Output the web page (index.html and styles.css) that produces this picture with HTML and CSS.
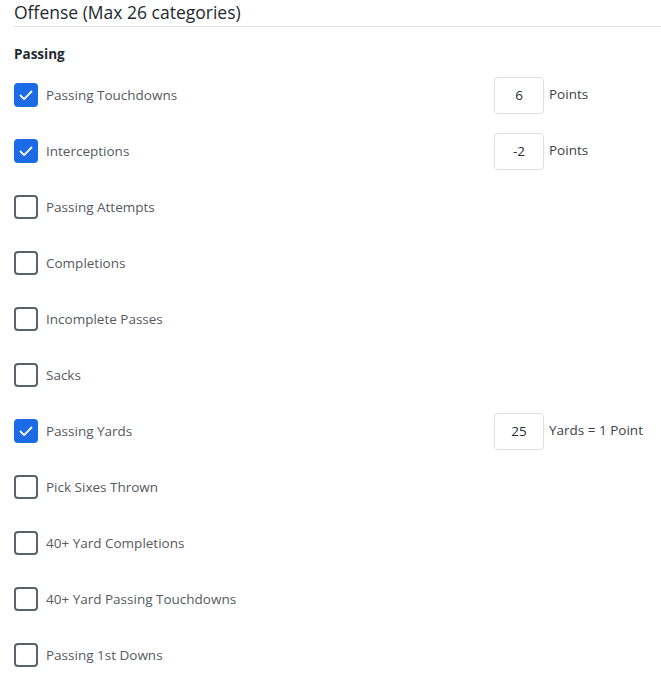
FILE: index.html
```html
<!DOCTYPE html>
<html lang="en">
<head>
    <meta charset="UTF-8">
    <meta name="viewport" content="width=device-width, initial-scale=1.0">
    <title>Offense Scoring</title>
    <link rel="stylesheet" href="styles.css">
</head>
<body>
    <div class="group-head">
        <h1><strong>Offense</strong> (Max 26 categories)</h1>
    </div>

    <h2 class="section-title">Passing</h2>

    <ul class="stat-list">
        <li class="stat">
            <span class="box checked"><svg viewBox="0 0 20 20"><path d="M4.5 10.5l3.6 3.6L15.5 6.5"/></svg></span>
            <span class="label">Passing Touchdowns</span>
            <span class="value">6</span>
            <span class="unit">Points</span>
        </li>
        <li class="stat">
            <span class="box checked"><svg viewBox="0 0 20 20"><path d="M4.5 10.5l3.6 3.6L15.5 6.5"/></svg></span>
            <span class="label">Interceptions</span>
            <span class="value">-2</span>
            <span class="unit">Points</span>
        </li>
        <li class="stat">
            <span class="box"></span>
            <span class="label">Passing Attempts</span>
        </li>
        <li class="stat">
            <span class="box"></span>
            <span class="label">Completions</span>
        </li>
        <li class="stat">
            <span class="box"></span>
            <span class="label">Incomplete Passes</span>
        </li>
        <li class="stat">
            <span class="box"></span>
            <span class="label">Sacks</span>
        </li>
        <li class="stat">
            <span class="box checked"><svg viewBox="0 0 20 20"><path d="M4.5 10.5l3.6 3.6L15.5 6.5"/></svg></span>
            <span class="label">Passing Yards</span>
            <span class="value">25</span>
            <span class="unit">Yards = 1 Point</span>
        </li>
        <li class="stat">
            <span class="box"></span>
            <span class="label">Pick Sixes Thrown</span>
        </li>
        <li class="stat">
            <span class="box"></span>
            <span class="label">40+ Yard Completions</span>
        </li>
        <li class="stat">
            <span class="box"></span>
            <span class="label">40+ Yard Passing Touchdowns</span>
        </li>
        <li class="stat">
            <span class="box"></span>
            <span class="label">Passing 1st Downs</span>
        </li>
    </ul>
</body>
</html>
```

FILE: styles.css
```css
body {
    margin: 0;
    font-family: "Open Sans", "Noto Sans", Arial, sans-serif;
    background: #fff;
    color: #232a31;
}
.group-head {
    margin-left: 14px;
    height: 26px;
    border-bottom: 1px solid #e2e2e2;
}
.group-head h1 {
    margin: 0;
    font-size: 17.5px;
    font-weight: 400;
    line-height: 28px;
    position: relative;
    top: -2px;
}
.group-head strong { font-weight: 500; }
.section-title {
    margin: 0;
    padding: 17px 0 0 14px;
    height: 23px;
    font-size: 13.5px;
    font-weight: 700;
    line-height: 20px;
    color: #232a31;
}
.stat-list {
    list-style: none;
    margin: 0;
    padding: 0;
}
.stat {
    display: flex;
    align-items: center;
    height: 56px;
    padding-left: 14px;
}
.box {
    width: 24px;
    height: 24px;
    box-sizing: border-box;
    border: 2px solid #5b636a;
    border-radius: 4px;
    flex: none;
}
.box.checked {
    background: #1b6ae6;
    border-color: #1b6ae6;
}
.box svg {
    display: block;
    width: 20px;
    height: 20px;
    fill: none;
    stroke: #fff;
    stroke-width: 1.8;
    stroke-linecap: round;
    stroke-linejoin: round;
}
.label {
    width: 448px;
    margin-left: 8px;
    font-size: 13.5px;
    color: #555a61;
}
.value {
    width: 50px;
    height: 37px;
    box-sizing: border-box;
    border: 1px solid #dedede;
    border-radius: 4px;
    display: flex;
    align-items: center;
    justify-content: center;
    font-size: 13.5px;
    color: #232a31;
}
.unit {
    margin-left: 5px;
    margin-top: -2px;
    font-size: 13.5px;
    color: #3d4146;
}
```
